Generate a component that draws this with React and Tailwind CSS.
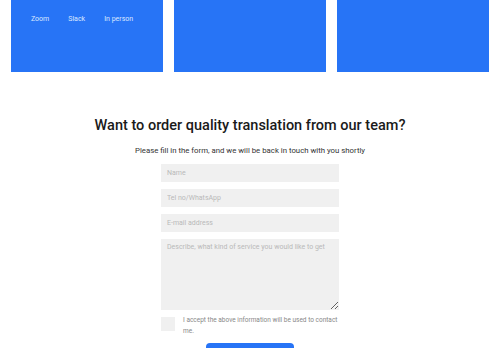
export default function App() {
  return (
    <div className="w-[500px] h-[348px] overflow-hidden bg-white" style={{ fontFamily: 'Roboto, "Liberation Sans", sans-serif' }}>
      <div className="grid grid-cols-3 gap-[11px] px-[11px]">
        <div className="h-[72px] bg-[#2774f6] flex gap-[19px] pl-5 pt-[14px] text-[7px] text-[#dce8ff]">
          <span>Zoom</span>
          <span>Slack</span>
          <span>In person</span>
        </div>
        <div className="h-[72px] bg-[#2774f6]" />
        <div className="h-[72px] bg-[#2774f6]" />
      </div>

      <div className="flex flex-col items-center pt-[44px]">
        <h2 className="text-[14.5px] font-medium text-[#1a1a1a] leading-5">Want to order quality translation from our team?</h2>
        <p className="mt-[9px] text-[7.8px] text-[#333] leading-3">Please fill in the form, and we will be back in touch with you shortly</p>

        <form className="mt-[7px] w-[178px] flex flex-col gap-[7px]">
          <input placeholder="Name" className="h-[18px] bg-[#f0f0f0] px-[6px] text-[7px] outline-none placeholder:text-[#b9b9b9]" />
          <input placeholder="Tel no/WhatsApp" className="h-[18px] bg-[#f0f0f0] px-[6px] text-[7px] outline-none placeholder:text-[#b9b9b9]" />
          <input placeholder="E-mail address" className="h-[18px] bg-[#f0f0f0] px-[6px] text-[7px] outline-none placeholder:text-[#b9b9b9]" />
          <textarea placeholder="Describe, what kind of service you would like to get" className="h-[71px] bg-[#f0f0f0] px-[6px] py-[3px] text-[7px] outline-none resize-y placeholder:text-[#b9b9b9]" />
          <div className="flex gap-[8px]">
            <div className="w-[14px] h-[14px] bg-[#f0f0f0] shrink-0" />
            <p className="-mt-[2px] text-[6.5px] leading-[11px] text-[#888]">I accept the above information will be used to contact me.</p>
          </div>
          <button type="button" className="self-center w-[88px] h-[20px] -mt-[1px] rounded-[4px] bg-[#2774f6]" />
        </form>
      </div>
    </div>
  )
}
